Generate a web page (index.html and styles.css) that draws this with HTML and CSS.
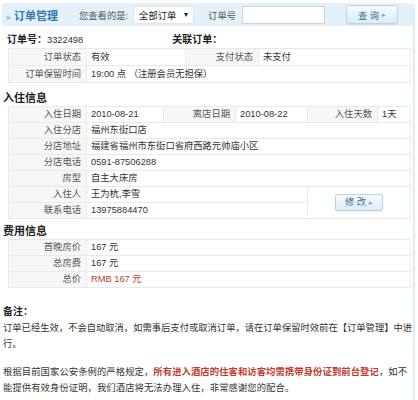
FILE: index.html
```html
<!DOCTYPE html>
<html lang="zh-CN">
<head>
  <meta charset="UTF-8">
  <title>订单管理</title>
  <link rel="stylesheet" href="styles.css">
</head>
<body>

  <div class="panel">
    <!-- top search bar -->
    <div class="bar">
      <span class="bar-title"><span class="bar-arrow">▸</span>订单管理</span>
      <span class="bar-label view-label">您查看的是:</span>
      <span class="select">全部订单<span class="caret">▾</span></span>
      <span class="bar-label no-label">订单号</span>
      <span class="input"></span>
      <span class="btn search-btn">查 询 <span class="btn-arrow">▸</span></span>
    </div>

    <div class="order-head">
      <span class="order-no"><b>订单号：</b>3322498</span>
      <b class="rel">关联订单：</b>
    </div>

    <table class="info t1">
      <colgroup>
        <col style="width:78px"><col style="width:99px"><col style="width:73px"><col>
      </colgroup>
      <tr>
        <td class="lbl">订单状态</td><td>有效</td>
        <td class="lbl">支付状态</td><td>未支付</td>
      </tr>
      <tr>
        <td class="lbl">订单保留时间</td><td colspan="3">19:00 点 （注册会员无担保）</td>
      </tr>
    </table>

    <h3 class="sec">入住信息</h3>
    <table class="info t2">
      <colgroup>
        <col style="width:78px"><col style="width:77px"><col style="width:72px"><col style="width:72px"><col style="width:70px"><col>
      </colgroup>
      <tr>
        <td class="lbl">入住日期</td><td>2010-08-21</td>
        <td class="lbl">离店日期</td><td>2010-08-22</td>
        <td class="lbl">入住天数</td><td>1天</td>
      </tr>
      <tr><td class="lbl">入住分店</td><td colspan="5">福州东街口店</td></tr>
      <tr><td class="lbl">分店地址</td><td colspan="5">福建省福州市东街口省府西路元帅庙小区</td></tr>
      <tr><td class="lbl">分店电话</td><td colspan="5">0591-87506288</td></tr>
      <tr><td class="lbl">房型</td><td colspan="5">自主大床房</td></tr>
      <tr>
        <td class="lbl">入住人</td><td colspan="3">王为杭,李雪</td>
        <td class="edit-cell" colspan="2" rowspan="2"><span class="btn edit-btn">修 改 <span class="btn-arrow">▸</span></span></td>
      </tr>
      <tr><td class="lbl">联系电话</td><td colspan="3">13975884470</td></tr>
    </table>

    <h3 class="sec">费用信息</h3>
    <table class="info t3">
      <colgroup><col style="width:78px"><col></colgroup>
      <tr><td class="lbl">首晚房价</td><td>167 元</td></tr>
      <tr><td class="lbl">总房费</td><td>167 元</td></tr>
      <tr><td class="lbl">总价</td><td class="price">RMB 167 元</td></tr>
    </table>

    <div class="note">
      <b class="note-title">备注：</b>
      <p>订单已经生效，不会自动取消，如需事后支付或取消订单，请在订单保留时效前在【订单管理】中进行。</p>
      <p class="law">根据目前国家公安条例的严格规定，<span class="warn">所有进入酒店的住客和访客均需携带身份证到前台登记</span>，如不能提供有效身份证明，我们酒店将无法办理入住，非常感谢您的配合。</p>
    </div>
  </div>

</body>
</html>
```

FILE: styles.css
```css
body {
  margin: 0;
  background: #fff;
  color: #333;
  font-family: "Liberation Sans", "Noto Sans CJK SC", sans-serif;
  font-size: 9.3px;
}
.panel {
  margin: 3px 3px 0 2px;
  border-right: 2px solid #dcebf5;
  border-top-right-radius: 6px;
  min-height: 400px;
}
.bar {
  height: 23px;
  background: #e4f1f9;
  border-top-right-radius: 6px;
  display: flex;
  align-items: center;
}
.bar-title {
  color: #2d78b0;
  font-size: 11px;
  font-weight: bold;
  padding-left: 5px;
}
.bar-arrow {
  color: #9cc3de;
  font-size: 8px;
  margin-right: 3px;
}
.bar-label {
  color: #555;
}
.view-label {
  margin-left: 21px;
}
.select {
  width: 54px;
  height: 16px;
  margin-left: 5px;
  padding-left: 5px;
  background: #fff;
  border: 1px solid #e0e6ea;
  color: #222;
  display: flex;
  align-items: center;
  justify-content: space-between;
}
.caret {
  font-size: 8px;
  margin-right: 5px;
}
.no-label {
  margin-left: 14px;
}
.input {
  width: 81px;
  height: 16px;
  margin-left: 6px;
  background: #fff;
  border: 1px solid #c4d6e3;
}
.btn {
  display: inline-flex;
  align-items: center;
  justify-content: center;
  background: linear-gradient(#f6fbfe, #dcecf6);
  border: 1px solid #bcd5e6;
  border-radius: 2px;
  color: #3b6f94;
  box-shadow: 0 1px 1px rgba(0, 0, 0, 0.08);
}
.btn-arrow {
  font-size: 7px;
  margin-left: 3px;
  color: #7aa3c2;
}
.search-btn {
  width: 50px;
  height: 17px;
  margin-left: 21px;
}
.order-head {
  display: flex;
  margin: 6px 0 0 5px;
  line-height: 16px;
}
.order-no b,
.rel {
  font-size: 10px;
  color: #222;
}
.rel {
  margin-left: 89px;
}
.sec {
  margin: 0;
  padding-left: 1px;
  font-size: 11px;
  line-height: 16px;
  color: #222;
}
.info {
  width: 403px;
  margin-left: 6px;
  border-collapse: collapse;
  table-layout: fixed;
}
.info td {
  border: 1px solid #e9e9e9;
  padding: 0 4px;
  height: 15px;
  line-height: 15px;
  white-space: nowrap;
  color: #333;
}
.info td.lbl {
  text-align: right;
  color: #555;
  background: #f7f7f7;
  padding-right: 5px;
}
.info td.price {
  color: #c0392b;
}
.t1 td {
  height: 16px;
}
.t1 + .sec {
  margin-top: 7px;
}
.t2 + .sec {
  margin-top: 4px;
}
.edit-cell {
  text-align: center;
  vertical-align: middle;
}
.edit-btn {
  width: 46px;
  height: 15px;
}
.note {
  margin-top: 16px;
  padding-left: 1px;
  width: 410px;
  line-height: 16px;
  color: #333;
}
.note-title {
  font-size: 10px;
  color: #222;
}
.note p {
  margin: 0 0 12px;
}
.note .law {
  letter-spacing: 0.1px;
}
.warn {
  color: #c0392b;
  font-weight: bold;
}
```
